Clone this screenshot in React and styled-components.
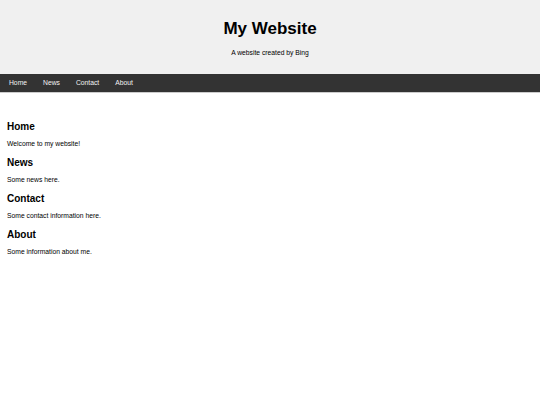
import styled, { createGlobalStyle } from "styled-components";

const GlobalStyle = createGlobalStyle`
  html, body {
    margin: 0;
    padding: 0;
    background: #fff;
  }
  body {
    font-family: "Liberation Sans", Arial, sans-serif;
    font-size: 6.75px;
    color: #000;
  }
`;

const links = ["Home", "News", "Contact", "About"];

const sections = [
  { title: "Home", text: "Welcome to my website!" },
  { title: "News", text: "Some news here." },
  { title: "Contact", text: "Some contact information here." },
  { title: "About", text: "Some information about me." },
];

export default function App() {
  return (
    <>
      <GlobalStyle />
      <Header>
        <Title>My Website</Title>
        <Tagline>A website created by Bing</Tagline>
      </Header>
      <Nav>
        {links.map((l) => (
          <NavLink key={l} href={"#" + l.toLowerCase()}>
            {l}
          </NavLink>
        ))}
      </Nav>
      <Main>
        {sections.map((s) => (
          <Section key={s.title} id={s.title.toLowerCase()}>
            <SectionTitle>{s.title}</SectionTitle>
            <SectionText>{s.text}</SectionText>
          </Section>
        ))}
      </Main>
    </>
  );
}

const Header = styled.header`
  background-color: #f0f0f0;
  padding: 19px 0 17px;
  text-align: center;
`;

const Title = styled.h1`
  margin: 0 0 10px;
  font-size: 17px;
  line-height: 19.5px;
  font-weight: bold;
`;

const Tagline = styled.p`
  margin: 0;
  font-size: 6.75px;
  line-height: 8px;
`;

const Nav = styled.nav`
  display: flex;
  background-color: #333;
  height: 18px;
  align-items: center;
  padding-left: 1px;
  border-bottom: 1px solid #ccc;
`;

const NavLink = styled.a`
  color: #f2f2f2;
  text-decoration: none;
  font-size: 6.75px;
  padding: 0 8px;
`;

const Main = styled.main`
  padding: 28px 7px;
`;

const Section = styled.section``;

const SectionTitle = styled.h2`
  margin: 0 0 7px;
  font-size: 10px;
  line-height: 12px;
  font-weight: bold;
`;

const SectionText = styled.p`
  margin: 0 0 9px;
  line-height: 8px;
`;
